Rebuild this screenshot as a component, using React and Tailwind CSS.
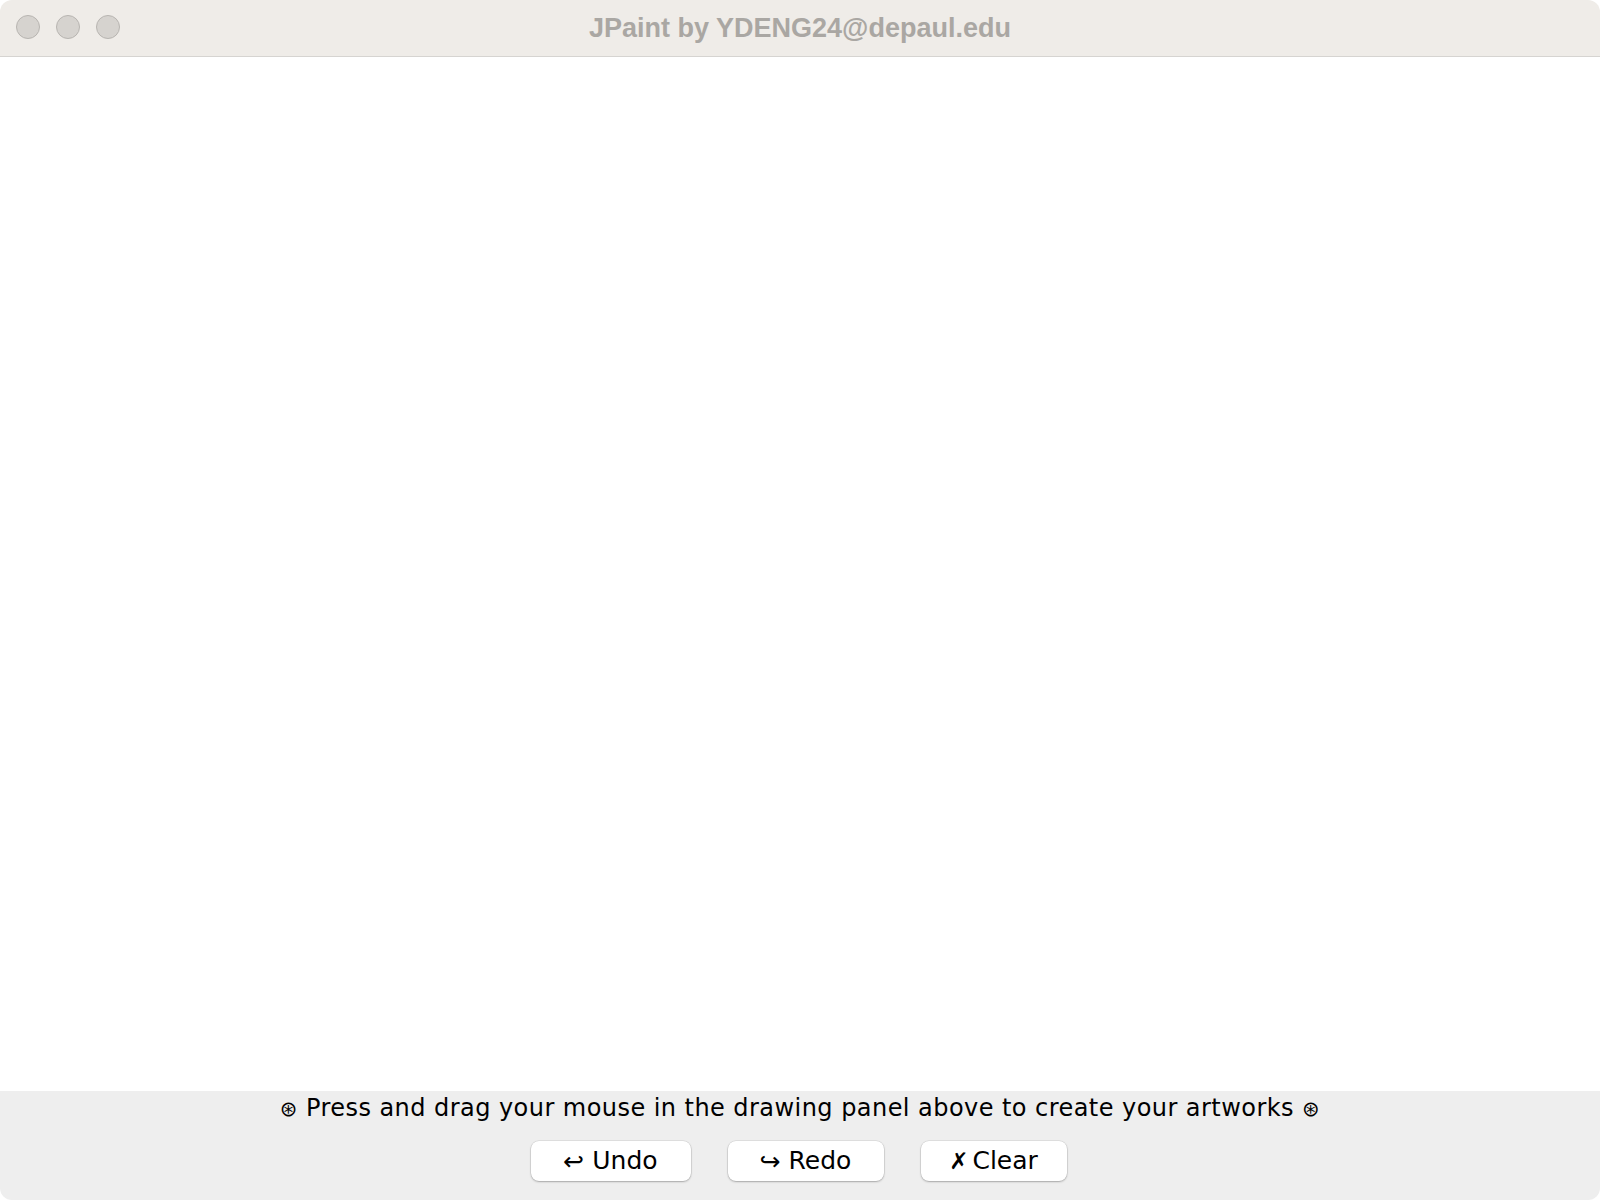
export default function App() {
  const btn =
    "h-[40px] rounded-[8px] bg-white shadow-[0_0_0_0.5px_rgba(0,0,0,0.12),0_1px_2px_rgba(0,0,0,0.25)] flex items-center justify-center text-[25px] text-black";
  return (
    <div className="w-[1600px] h-[1200px] bg-white overflow-hidden">
      <div className="w-full h-full rounded-[12px] overflow-hidden flex flex-col bg-white">
        <div className="relative h-[57px] bg-[#efece8] border-b border-[#d6d4d1] flex items-center shrink-0">
          <div className="absolute left-[16px] top-[15px] flex gap-[16px]">
            <div className="w-[24px] h-[24px] rounded-full bg-[#d6d3cf] border border-[#b8b5b1]" />
            <div className="w-[24px] h-[24px] rounded-full bg-[#d6d3cf] border border-[#b8b5b1]" />
            <div className="w-[24px] h-[24px] rounded-full bg-[#d6d3cf] border border-[#b8b5b1]" />
          </div>
          <div
            className="w-full text-center font-bold text-[27px] text-[#aaa7a3]"
            style={{ fontFamily: '"Liberation Sans", Arial, sans-serif' }}
          >
            JPaint by YDENG24@depaul.edu
          </div>
        </div>
        <div className="flex-1 bg-white" />
        <div
          className="h-[109px] bg-[#eeeeee] shrink-0 flex flex-col items-center"
          style={{ fontFamily: '"DejaVu Sans", sans-serif' }}
        >
          <div className="text-[24px] text-black leading-[32px] mt-[1px] tracking-[0.45px]">
            <span className="text-[21px] align-middle">⊛</span> Press and drag your mouse in the drawing panel above to create your artworks <span className="text-[21px] align-middle">⊛</span>
          </div>
          <div className="flex gap-[37px] mt-[16px] -ml-[3px]">
            <button className={btn + " w-[160px]"}>
              <span className="mr-[8px] text-[25px] leading-none">↩</span>Undo
            </button>
            <button className={btn + " w-[156px]"}>
              <span className="mr-[8px] text-[25px] leading-none">↪</span>Redo
            </button>
            <button className={btn + " w-[146px]"}>
              <span className="mr-[4px] text-[23px] font-bold">✗</span>Clear
            </button>
          </div>
        </div>
      </div>
    </div>
  );
}
